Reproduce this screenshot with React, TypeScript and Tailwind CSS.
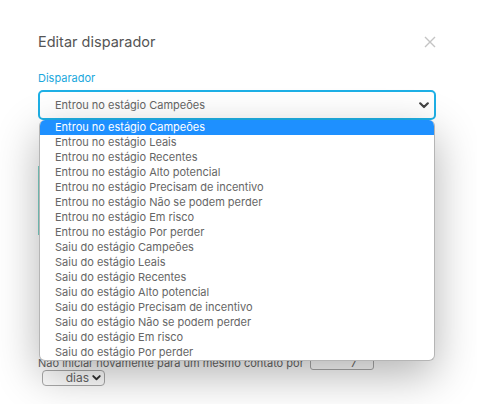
import React from "react";

const items = [
  "Entrou no estágio Campeões",
  "Entrou no estágio Leais",
  "Entrou no estágio Recentes",
  "Entrou no estágio Alto potencial",
  "Entrou no estágio Precisam de incentivo",
  "Entrou no estágio Não se podem perder",
  "Entrou no estágio Em risco",
  "Entrou no estágio Por perder",
  "Saiu do estágio Campeões",
  "Saiu do estágio Leais",
  "Saiu do estágio Recentes",
  "Saiu do estágio Alto potencial",
  "Saiu do estágio Precisam de incentivo",
  "Saiu do estágio Não se podem perder",
  "Saiu do estágio Em risco",
  "Saiu do estágio Por perder",
];

function Chevron({ className }: { className?: string }) {
  return (
    <svg viewBox="0 0 10 7" className={className} fill="none">
      <path d="M1.2 1.3 L5 5 L8.8 1.3" stroke="currentColor" strokeWidth="2.2" strokeLinecap="round" strokeLinejoin="round" />
    </svg>
  );
}

export default function App() {
  return (
    <div className="w-[477px] h-[404px] flex bg-white overflow-hidden font-['Inter',sans-serif]">
      <div className="flex-1 bg-white pl-[38px] pr-[41px] pt-[30px] relative">
        <div className="flex items-center justify-between h-[24px]">
          <span className="text-[14.5px] text-[#555] leading-[24px]">Editar disparador</span>
          <svg viewBox="0 0 12 12" className="w-[12px] h-[12px] text-[#c4c4c4]" fill="none">
            <path d="M1 1 L11 11 M11 1 L1 11" stroke="currentColor" strokeWidth="1.4" />
          </svg>
        </div>
        <div className="mt-[16px] text-[11px] leading-[16px] text-[#1aa7dc]">Disparador</div>
        <div className="relative mt-[4px] w-[398px]">
          <div className="h-[30px] border-2 border-[#1eb0e6] rounded-[5px] flex items-center justify-between pl-[15px] pr-[5px]">
            <span className="text-[11px] text-[#666]">Entrou no estágio Campeões</span>
            <Chevron className="w-[10px] h-[7px] text-[#444]" />
          </div>
          <div className="absolute left-[1px] top-full w-[396px] z-10 bg-white rounded-[6px] border border-[#b5b5b5] border-t-0 overflow-hidden shadow-[0_14px_44px_rgba(0,0,0,0.3)]">
            {items.map((t, i) => (
              <div
                key={t}
                className={
                  i === 0
                    ? "h-[15px] leading-[15px] pl-[15px] text-[11px] bg-[#1e90ff] text-white"
                    : "h-[15px] leading-[15px] pl-[15px] text-[11px] text-[#666]"
                }
              >
                {t}
              </div>
            ))}
          </div>
        </div>
        <div className="mt-[46px] h-[69px] w-[300px] border-l-2 border-[#7fd3c9]" />
        <div className="mt-[121px] flex items-center h-[14px] text-[11px] text-[#666]">
          <span>Não iniciar novamente para um mesmo contato por</span>
          <div className="ml-[6px] w-[64px] h-[14px] border border-[#aaa] rounded-[3px] flex items-center justify-end pr-[16px] text-[11px]">7</div>
        </div>
        <div className="ml-[4px] mt-[0px] w-[63px] h-[16px] border border-[#aaa] rounded-[4px] flex items-center justify-end pr-[3px] gap-[3px] text-[12px] text-[#666]">
          <span>dias</span>
          <Chevron className="w-[9px] h-[6px] text-[#333]" />
        </div>
      </div>
      <div className="w-[2px] h-full flex flex-col">
        <div className="h-[20px] bg-black" />
        <div className="flex-1 bg-[#4d4d4d]" />
      </div>
    </div>
  );
}
